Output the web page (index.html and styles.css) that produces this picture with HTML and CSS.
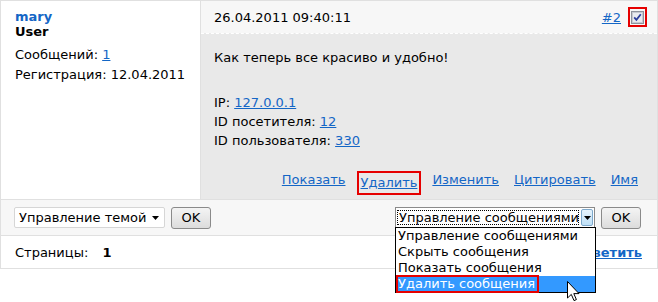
FILE: index.html
```html
<!DOCTYPE html>
<html lang="ru">
<head>
    <meta charset="UTF-8">
    <title>Тема | Форум</title>
    <link rel="stylesheet" href="styles.css">
</head>
<body>
    <div class="topic">
        <div class="post">
            <div class="post-author">
                <a class="author-name" href="#">mary</a>
                <div class="author-role">User</div>
                <p class="author-stat">Сообщений: <a href="#">1</a></p>
                <p class="author-stat">Регистрация: 12.04.2011</p>
            </div>

            <div class="post-main">
                <div class="post-head">
                    <span class="post-date">26.04.2011 09:40:11</span>
                    <a class="post-num" href="#">#2</a>
                    <span class="mark mark-box">
                        <svg class="checkbox" width="13" height="13" viewBox="0 0 13 13">
                            <rect x="0.5" y="0.5" width="12" height="12" fill="#dcdfe6" stroke="#8d929c"/>
                            <rect x="1.5" y="1.5" width="10" height="10" fill="#e9ebf0" stroke="#c5c9d2"/>
                            <path d="M3.2 6.4 L5.4 8.8 L9.8 3.2" fill="none" stroke="#2b3f9c" stroke-width="1.8"/>
                        </svg>
                    </span>
                </div>

                <div class="post-body">
                    <p class="post-text">Как теперь все красиво и удобно!</p>
                    <p class="post-info">
                        IP: <a href="#">127.0.0.1</a><br>
                        ID посетителя: <a href="#">12</a><br>
                        ID пользователя: <a href="#">330</a>
                    </p>
                </div>

                <div class="post-actions">
                    <a href="#">Показать</a>
                    <a class="mark" href="#">Удалить</a>
                    <a href="#">Изменить</a>
                    <a href="#">Цитировать</a>
                    <a href="#">Имя</a>
                </div>
            </div>
        </div>

        <div class="toolbar">
            <div class="toolbar-group">
                <div class="select select-topic">
                    <span class="select-value">Управление темой</span>
                    <span class="select-arrow"><svg width="7" height="4" viewBox="0 0 7 4"><path d="M0 0h7L3.5 4z" fill="#000"/></svg></span>
                </div>
                <button class="btn">OK</button>
            </div>

            <div class="toolbar-group">
                <div class="select select-open">
                    <span class="select-value">Управление сообщениями</span>
                    <span class="select-arrow"><svg width="7" height="4" viewBox="0 0 7 4"><path d="M0 0h7L3.5 4z" fill="#000"/></svg></span>
                    <ul class="dropdown">
                        <li>Управление сообщениями</li>
                        <li>Скрыть сообщения</li>
                        <li>Показать сообщения</li>
                        <li class="selected"><span class="mark">Удалить сообщения</span></li>
                    </ul>
                    <svg class="cursor" width="13" height="21" viewBox="0 0 13 21">
                        <path d="M0.5 0.5 L0.5 17 L4.3 13.4 L7 19.6 L9.4 18.6 L6.8 12.6 L12 12.6 Z" fill="#fff" stroke="#000" stroke-width="1"/>
                    </svg>
                </div>
                <button class="btn">OK</button>
            </div>
        </div>

        <div class="pager">
            <span>Страницы: <b class="page-current">1</b></span>
            <a class="reply" href="#">Ответить</a>
        </div>
    </div>
</body>
</html>
```

FILE: styles.css
```css
:root {
    --link: #1466c6;
    --border: #e0e0e0;
    --head-bg: #f7f7f7;
    --body-bg: #e9e9e9;
    --mark: #e60000;
}

* {
    margin: 0;
    padding: 0;
    box-sizing: border-box;
}

body {
    min-height: 100vh;
    font-family: 'DejaVu Sans', Verdana, sans-serif;
    font-size: 13px;
    color: #000;
    background: #fff;
}

a {
    color: var(--link);
}

.topic {
    width: 658px;
    border: 1px solid var(--border);
    border-bottom: none;
}

/* Post */
.post {
    display: flex;
    border-bottom: 1px solid var(--border);
}

.post-author {
    width: 200px;
    padding: 8px 14px;
    border-right: 1px solid var(--border);
    line-height: 15px;
}

.author-name {
    font-weight: bold;
    text-decoration: none;
}

.author-role {
    font-weight: bold;
    margin-bottom: 6px;
}

.author-stat {
    line-height: 20px;
}

.post-main {
    flex: 1;
    display: flex;
    flex-direction: column;
    background: var(--body-bg);
}

.post-head {
    display: flex;
    align-items: center;
    height: 33px;
    padding: 0 10px 0 13px;
    background: var(--head-bg);
    background-clip: padding-box;
    border-bottom: 1px dashed #fff;
}

.post-date {
    flex: 1;
}

.post-num {
    margin-right: 7px;
}

.mark {
    border: 2px solid var(--mark);
}

.mark-box {
    display: flex;
    padding: 2px 1px 1px;
}

.post-body {
    flex: 1;
    padding: 14px 13px 0;
    line-height: 19px;
}

.post-text {
    margin-bottom: 26px;
}

.post-actions {
    display: flex;
    justify-content: flex-end;
    gap: 15px;
    padding: 21px 19px 4px 13px;
    line-height: 18px;
}

.post-actions .mark {
    padding: 1px 2px;
    margin: 0 -4px;
}

/* Toolbar */
.toolbar {
    display: flex;
    justify-content: space-between;
    align-items: center;
    height: 36px;
    padding: 0 16px 0 13px;
    background: var(--head-bg);
    border-bottom: 1px solid var(--border);
}

.toolbar-group {
    display: flex;
    align-items: center;
    gap: 6px;
}

.select {
    position: relative;
    display: flex;
    align-items: center;
    height: 21px;
    padding-left: 4px;
    background: #fff;
    border: 1px solid #d6d6d6;
    border-radius: 2px;
}

.select-topic {
    width: 151px;
}

.select-value {
    flex: 1;
    white-space: nowrap;
}

.select-arrow {
    display: flex;
    align-items: center;
    justify-content: center;
    width: 17px;
    height: 100%;
}

.select-open {
    width: 200px;
    border-color: #8a8a8a;
    border-radius: 0;
}

.select-open .select-value {
    outline: 1px dotted #000;
    outline-offset: -1px;
    padding-left: 2px;
    margin-left: -3px;
    margin-right: 2px;
}

.select-open .select-arrow {
    width: 15px;
    height: 17px;
    margin-right: 1px;
    background: linear-gradient(#e6f3fc, #bfe0f7);
    border: 1px solid #7ea9cc;
    border-radius: 2px;
}

.btn {
    width: 40px;
    height: 22px;
    font-family: inherit;
    font-size: 13px;
    background: linear-gradient(#f4f4f4, #dcdcdc);
    border: 1px solid #8a8a8a;
    border-radius: 3px;
    color: #000;
}

.dropdown {
    position: absolute;
    top: 19px;
    left: -1px;
    width: 201px;
    list-style: none;
    background: #fff;
    border: 1px solid #000;
    z-index: 2;
}

.dropdown li {
    height: 16px;
    line-height: 16px;
    padding-left: 2px;
    white-space: nowrap;
}

.dropdown .selected {
    background: #3399ff;
    color: #fff;
    padding-left: 0;
}

.dropdown .selected .mark {
    display: inline-block;
    height: 18px;
    margin-top: -1px;
    padding: 0 2px 0 0;
    line-height: 14px;
}

.cursor {
    position: absolute;
    top: 73px;
    left: 171px;
    z-index: 3;
}

/* Pager */
.pager {
    display: flex;
    justify-content: space-between;
    align-items: center;
    height: 33px;
    padding: 0 15px 0 14px;
    border-bottom: 1px solid var(--border);
}

.page-current {
    margin-left: 10px;
}

.reply {
    font-weight: bold;
}
```
